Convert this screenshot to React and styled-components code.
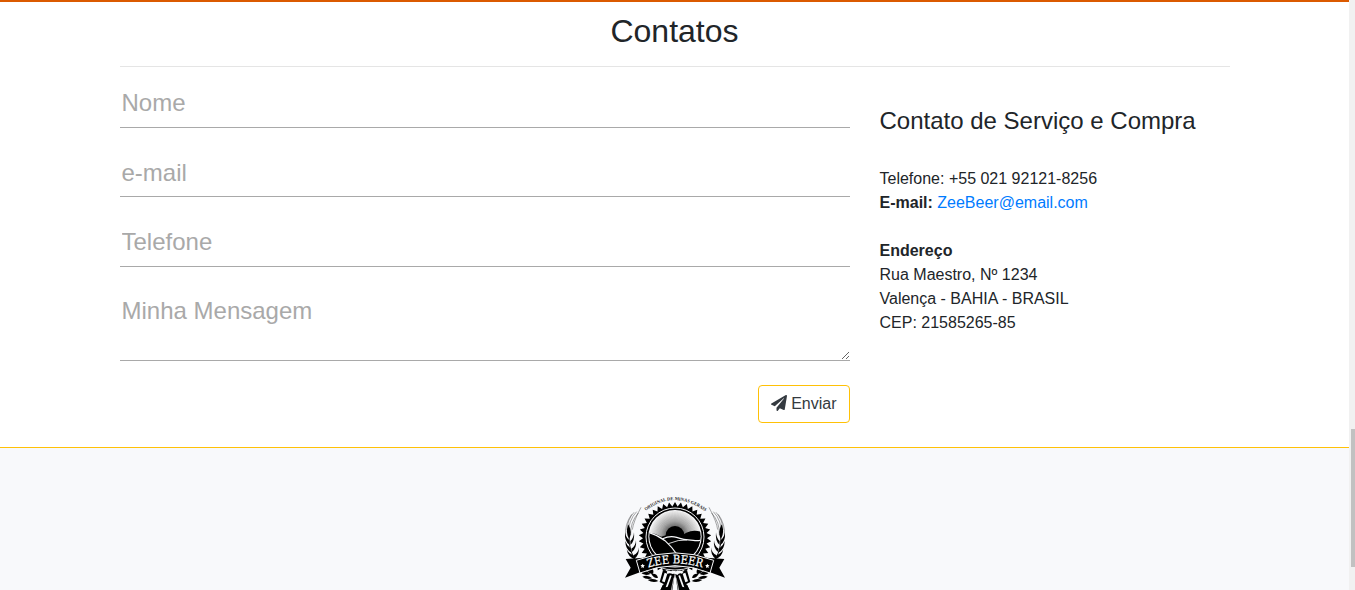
import React from 'react';
import styled, { createGlobalStyle } from 'styled-components';
import { FaPaperPlane } from 'react-icons/fa';

const GlobalStyle = createGlobalStyle`
  *, *::before, *::after { box-sizing: border-box; }
  body {
    margin: 0;
    overflow: hidden;
    background: #fff;
    color: #212529;
    font: 400 16px/1.5 Arial, "Liberation Sans", sans-serif;
  }
`;

const Shell = styled.div`
  display: flex;
  height: 590px;
  overflow: hidden;
`;
const Page = styled.div`
  flex: 1;
  min-width: 0;
`;
const ScrollTrack = styled.div`
  width: 6px;
  padding: 429px 0 0 2px;
  background: #f1f1f1;
`;
const ScrollThumb = styled.div`
  height: 138px;
  background: #c1c1c1;
`;
const Section = styled.section`
  height: 447px;
  padding-top: 9.6px;
  border-top: 2px solid #db5a00;
`;
const Container = styled.div`
  width: 1110px;
  margin: 0 auto;
`;
const Title = styled.h2`
  margin: 0;
  font-size: 32px;
  font-weight: 400;
  line-height: 1.2;
  text-align: center;
`;
const Divider = styled.hr`
  margin: 16px 0;
  border: 0;
  border-top: 1px solid rgba(0, 0, 0, 0.1);
`;
const Columns = styled.div`
  display: grid;
  grid-template-columns: 730px 350px;
  column-gap: 30px;
`;
const Form = styled.form`
  display: flex;
  flex-direction: column;
  gap: 24px;
`;
const Field = styled.input`
  display: block;
  width: 100%;
  height: 45.2px;
  padding: 1px 2px 4.4px;
  border: 0;
  border-bottom: 1px solid #a9a9a9;
  background: transparent;
  color: #212529;
  font: 400 24px/1.5 Arial, "Liberation Sans", sans-serif;
  outline: none;
  &::placeholder { color: #a9a9a9; opacity: 1; }
`;
const Message = styled(Field)`
  height: 70.4px;
  padding-top: 2.2px;
  resize: vertical;
`;
const SendButton = styled.button`
  display: flex;
  align-items: center;
  align-self: flex-end;
  gap: 4.5px;
  height: 38px;
  padding: 0 12px;
  border: 1px solid #ffc107;
  border-radius: 4px;
  background: transparent;
  color: #343a40;
  font: 400 16px/1.5 Arial, "Liberation Sans", sans-serif;
  svg { margin-bottom: 2px; }
`;
const Info = styled.aside`
  padding-top: 24px;
`;
const InfoTitle = styled.h4`
  margin: 0 0 31.2px;
  font-size: 24px;
  font-weight: 400;
  line-height: 1.2;
`;
const Paragraph = styled.p`
  margin: 0 0 24px;
`;
const MailLink = styled.a`
  color: #007bff;
  text-decoration: none;
`;
const Footer = styled.footer`
  display: flex;
  justify-content: center;
  height: 143px;
  padding-top: 37px;
  border-top: 1px solid #ffc107;
  background: #f8f9fb;
`;
const LogoSvg = styled.svg`
  display: block;
  flex: none;
  width: 120px;
  height: 105px;
`;

const ringPoints = (cx, cy, outer, inner, count) =>
  Array.from({ length: count * 2 }, (_, i) => {
    const a = (i * Math.PI) / count;
    const r = i % 2 ? inner : outer;
    return `${(cx + r * Math.sin(a)).toFixed(1)},${(cy - r * Math.cos(a)).toFixed(1)}`;
  }).join(' ');

const rays = Array.from({ length: 45 }, (_, i) => {
  const a = Math.PI + (i * Math.PI) / 44;
  return `M${180 + 27 * Math.cos(a)} ${151 + 27 * Math.sin(a)}L${180 + 77 * Math.cos(a)} ${151 + 77 * Math.sin(a)}`;
}).join('');

function Branch() {
  return (
    <g>
      <g fill="none" stroke="#111" strokeWidth="2">
        <path d="M39 151Q40 105 65 80M32 150Q29 118 50 88M47 150Q45 112 70 84M36 135Q37 104 57 82M52 134Q55 110 78 67" opacity=".55" />
        <path d="M42 150Q40 200 68 238" strokeWidth="3" />
      </g>
      <g fill="#000">
        <path d="M40 118Q53 142 43 161Q30 145 40 118Z" />
        <path d="M30 142Q33 158 43 166L44 180Q28 170 30 142Z" />
        <path d="M57 142Q56 160 46 168L46 180Q60 168 57 142Z" />
        <path d="M31 168Q35 182 46 189L50 203Q31 194 31 168Z" />
        <path d="M63 166Q62 184 49 191L50 202Q66 190 63 166Z" />
        <path d="M35 193Q41 206 54 210L61 223Q39 218 35 193Z" />
        <path d="M71 187Q71 205 55 211L58 221Q74 211 71 187Z" />
        <path d="M76 262Q92 251 106 267Q89 275 76 262Z" />
        <path d="M95 256Q101 247 113 251Q118 262 112 268Q102 266 95 256Z" />
        <path d="M82 275Q98 268 112 280Q94 285 82 275Z" />
        <path d="M109 267Q125 263 129 278Q118 282 109 267Z" />
        <path d="M98 285Q116 277 130 288Q114 295 98 285Z" />
      </g>
    </g>
  );
}

function Mug() {
  return (
    <g>
      <path d="M144 256L180 262L172 315H136L146 297L134 291Z" fill="#000" />
      <path d="M149 263L157 266L149 292L141 289Z" fill="#f8f9fb" />
      <path d="M165 271L170 272L158 305L152 307Z" fill="#f8f9fb" />
      <path d="M143 300L151 304L147 315H137Z" fill="#000" />
    </g>
  );
}

function Logo() {
  return (
    <LogoSvg viewBox="0 0 360 315" role="img" aria-label="Zee Beer">
      <defs>
        <clipPath id="scene"><circle cx="180" cy="154" r="77" /></clipPath>
        <radialGradient id="glow" cx="180" cy="151" r="77" gradientUnits="userSpaceOnUse">
          <stop offset="0.36" stopColor="#555" />
          <stop offset="0.55" stopColor="#999" />
          <stop offset="1" stopColor="#f4f4f4" />
        </radialGradient>
        <path id="topArc" d="M92 77Q180 11 276 83" />
        <path id="nameArc" d="M100 248Q180 221 272 251" />
      </defs>
      <text fill="#222" fontFamily="Liberation Serif, serif" fontSize="14" fontWeight="700">
        <textPath href="#topArc" textLength="194" lengthAdjust="spacingAndGlyphs">ORIGINAL DE MINAS GERAIS</textPath>
      </text>
      <Branch />
      <g transform="translate(360 0) scale(-1 1)"><Branch /></g>
      <polygon points={ringPoints(180, 160, 109, 96, 38)} fill="#000" />
      <circle cx="180" cy="156" r="87" fill="none" stroke="#f8f9fb" strokeWidth="3" />
      <circle cx="180" cy="155" r="80" fill="#f8f9fb" />
      <g clipPath="url(#scene)">
        <circle cx="180" cy="154" r="77" fill="url(#glow)" />
        <path d={rays} stroke="#fff" strokeWidth=".8" opacity=".5" />
        <circle cx="180" cy="151" r="28" fill="#000" />
        <path d="M98 142Q119 145 139 155Q159 147 181 150Q202 154 214 143Q238 132 265 143V240H98Z" fill="#000" />
        <g fill="none" stroke="#f8f9fb" strokeWidth="3.5">
          <path d="M99 142Q126 149 150 167Q173 188 188 211" />
          <path d="M143 161Q165 151 185 157Q203 164 235 166Q249 169 261 164" />
          <path d="M160 176Q191 163 216 165" strokeWidth="2.5" />
        </g>
      </g>
      <path d="M134 254Q180 268 226 254L224 315H136Z" fill="#f8f9fb" />
      <g fill="none" stroke="#f8f9fb" strokeWidth="2.5">
        <path d="M130 246Q180 264 230 246M141 240Q180 253 219 240" />
      </g>
      <Mug />
      <g transform="translate(360 0) scale(-1 1)"><Mug /></g>
      <path d="M177 278L169 315M183 278L191 315" stroke="#f8f9fb" strokeWidth="2" />
      <path d="M155 260Q161 254 168 259Q176 255 183 259Q195 254 206 260L201 266Q192 263 187 270Q179 265 173 267Q164 263 157 267Z" fill="#f8f9fb" />
      <path d="M32 222L87 218L79 260L30 278L47 248Z" fill="#000" />
      <path d="M328 222L273 218L281 260L330 278L313 248Z" fill="#000" />
      <path d="M64 226Q180 181 296 226L285 264Q180 220 75 264Z" fill="#000" stroke="#f8f9fb" strokeWidth="3" />
      <text fill="#fff" stroke="#fff" strokeWidth=".7" fontFamily="DejaVu Serif, serif" fontSize="35">
        <textPath href="#nameArc" textLength="164" lengthAdjust="spacingAndGlyphs">ZEE BEER</textPath>
      </text>
      <polygon points={ringPoints(83, 243, 7, 3.5, 5)} fill="#fff" />
      <polygon points={ringPoints(277, 243, 7, 3.5, 5)} fill="#fff" />
    </LogoSvg>
  );
}

export default function App() {
  return (
    <>
      <GlobalStyle />
      <Shell>
        <Page>
          <Section>
            <Container>
              <Title>Contatos</Title>
              <Divider />
              <Columns>
                <Form>
                  <Field type="text" placeholder="Nome" />
                  <Field type="email" placeholder="e-mail" />
                  <Field type="tel" placeholder="Telefone" />
                  <Message as="textarea" placeholder="Minha Mensagem" />
                  <SendButton type="button"><FaPaperPlane size={16} />Enviar</SendButton>
                </Form>
                <Info>
                  <InfoTitle>Contato de Serviço e Compra</InfoTitle>
                  <Paragraph>
                    Telefone: +55 021 92121-8256<br />
                    <b>E-mail:</b> <MailLink href="#">ZeeBeer@email.com</MailLink>
                  </Paragraph>
                  <Paragraph>
                    <b>Endereço</b><br />
                    Rua Maestro, Nº 1234<br />
                    Valença - BAHIA - BRASIL<br />
                    CEP: 21585265-85
                  </Paragraph>
                </Info>
              </Columns>
            </Container>
          </Section>
          <Footer><Logo /></Footer>
        </Page>
        <ScrollTrack><ScrollThumb /></ScrollTrack>
      </Shell>
    </>
  );
}
